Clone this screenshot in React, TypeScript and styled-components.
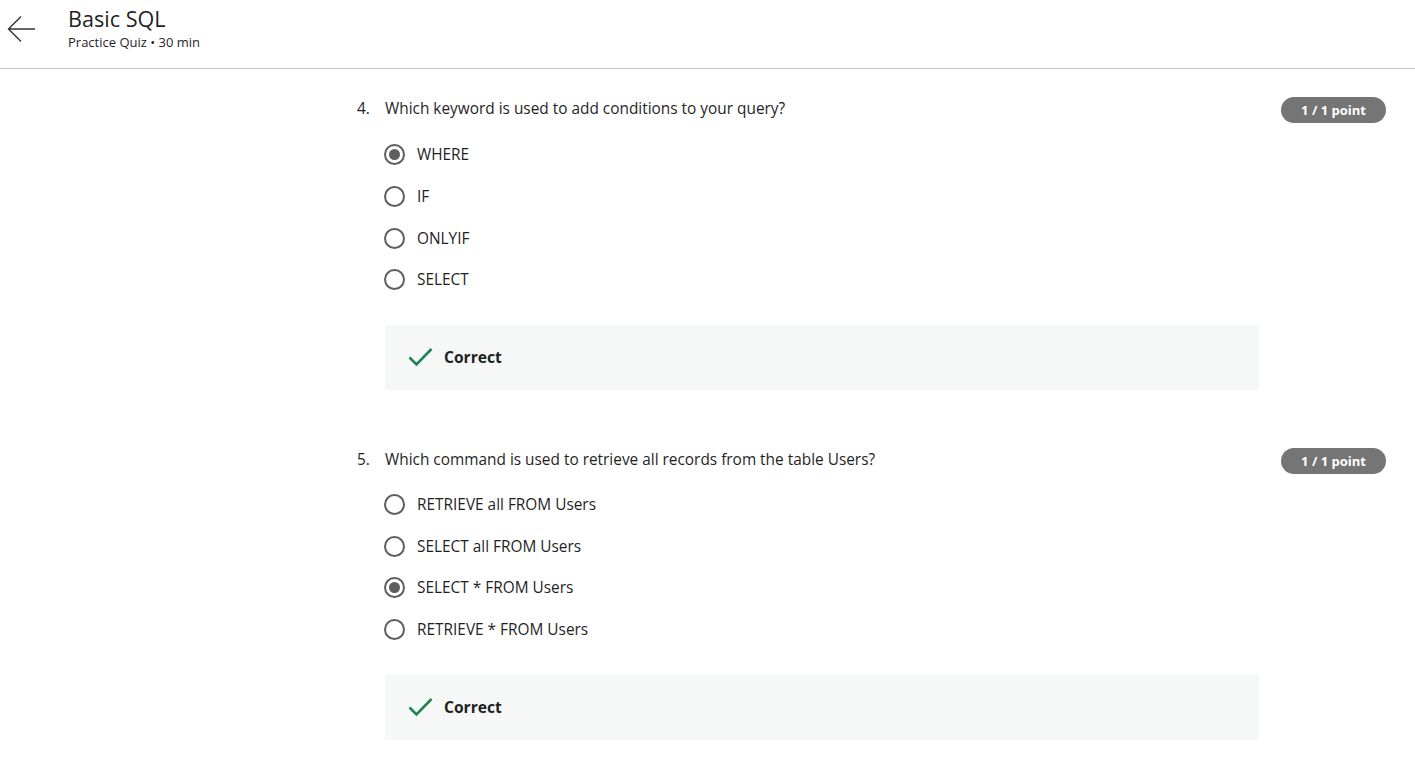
import React from "react";
import styled, { createGlobalStyle } from "styled-components";

const Global = createGlobalStyle`
  html, body { margin: 0; padding: 0; background: #fff; }
  body { font-family: "Open Sans", "Noto Sans", sans-serif; color: #1f1f1f; }
  * { box-sizing: border-box; }
`;

const Header = styled.header`
  height: 69px;
  border-bottom: 1px solid #c4c4c4;
  display: flex;
  align-items: flex-start;
`;

const BackButton = styled.button`
  width: 29px;
  height: 28px;
  margin: 15px 0 0 7px;
  padding: 0;
  border: none;
  background: none;
  display: flex;
  align-items: center;
  justify-content: center;
  color: #333;
`;

const TitleBlock = styled.div`
  display: flex;
  flex-direction: column;
  margin-left: 32px;
  padding-top: 5px;
`;

const Title = styled.h1`
  margin: 0;
  font-size: 21.6px;
  line-height: 28px;
  font-weight: 400;
  color: #1f1f1f;
`;

const Subtitle = styled.div`
  font-size: 13px;
  line-height: 18px;
  color: #1f1f1f;
`;

const Main = styled.main`
  display: flex;
  flex-direction: column;
  padding: 28px 29px 0 357px;
  gap: 58px;
`;

const Question = styled.section`
  display: flex;
  align-items: flex-start;
`;

const Number = styled.div`
  width: 28px;
  font-size: 15.4px;
  line-height: 24px;
`;

const Body = styled.div`
  width: 874px;
  display: flex;
  flex-direction: column;
`;

const Prompt = styled.div`
  font-size: 15.4px;
  line-height: 24px;
`;

const Options = styled.div<{ $top: number }>`
  display: flex;
  flex-direction: column;
  margin-top: ${(p) => p.$top}px;
`;

const Option = styled.label`
  height: 41.7px;
  display: flex;
  align-items: center;
  font-size: 15.4px;
  color: #1f1f1f;
`;

const Radio = styled.span<{ $checked: boolean }>`
  width: 21px;
  height: 21px;
  border-radius: 50%;
  border: 2px solid #5e5e5e;
  display: flex;
  align-items: center;
  justify-content: center;
  margin-left: -1px;
  margin-right: 12px;
  &::after {
    content: "";
    display: ${(p) => (p.$checked ? "block" : "none")};
    width: 11px;
    height: 11px;
    border-radius: 50%;
    background: #5e5e5e;
  }
`;

const Feedback = styled.div`
  margin-top: 24px;
  height: 65px;
  background: #f5f8f7;
  display: flex;
  align-items: center;
  padding-left: 23px;
  gap: 11px;
  font-size: 15.6px;
  font-weight: 700;
  color: #1f1f1f;
`;

const Badge = styled.div`
  margin-left: auto;
  margin-top: 0;
  height: 26px;
  width: 105px;
  border-radius: 13px;
  background: #757575;
  color: #fff;
  font-size: 13px;
  font-weight: 700;
  display: flex;
  align-items: center;
  justify-content: center;
`;

const ArrowIcon = () => (
  <svg width="29" height="28" viewBox="0 0 29 28" fill="none" stroke="#333" strokeWidth="1.4">
    <path d="M28 14H2M14 1.5L1.5 14L14 26.5" />
  </svg>
);

const CheckIcon = () => (
  <svg width="25" height="20" viewBox="0 0 25 20" fill="none" stroke="#1f8354" strokeWidth="2.6">
    <path d="M1.5 10.5L8.5 17.5L23.5 2" />
  </svg>
);

type Q = { n: number; text: string; options: string[]; checked: number; top: number };

const questions: Q[] = [
  {
    n: 4,
    text: "Which keyword is used to add conditions to your query?",
    options: ["WHERE", "IF", "ONLYIF", "SELECT"],
    checked: 0,
    top: 13,
  },
  {
    n: 5,
    text: "Which command is used to retrieve all records from the table Users?",
    options: ["RETRIEVE all FROM Users", "SELECT all FROM Users", "SELECT * FROM Users", "RETRIEVE * FROM Users"],
    checked: 2,
    top: 12,
  },
];

export default function App() {
  return (
    <>
      <Global />
      <Header>
        <BackButton aria-label="Back">
          <ArrowIcon />
        </BackButton>
        <TitleBlock>
          <Title>Basic SQL</Title>
          <Subtitle>Practice Quiz • 30 min</Subtitle>
        </TitleBlock>
      </Header>
      <Main>
        {questions.map((q) => (
          <Question key={q.n}>
            <Number>{q.n}.</Number>
            <Body>
              <Prompt>{q.text}</Prompt>
              <Options $top={q.top}>
                {q.options.map((o, i) => (
                  <Option key={o}>
                    <Radio $checked={i === q.checked} />
                    {o}
                  </Option>
                ))}
              </Options>
              <Feedback>
                <CheckIcon />
                Correct
              </Feedback>
            </Body>
            <Badge>1 / 1 point</Badge>
          </Question>
        ))}
      </Main>
    </>
  );
}
